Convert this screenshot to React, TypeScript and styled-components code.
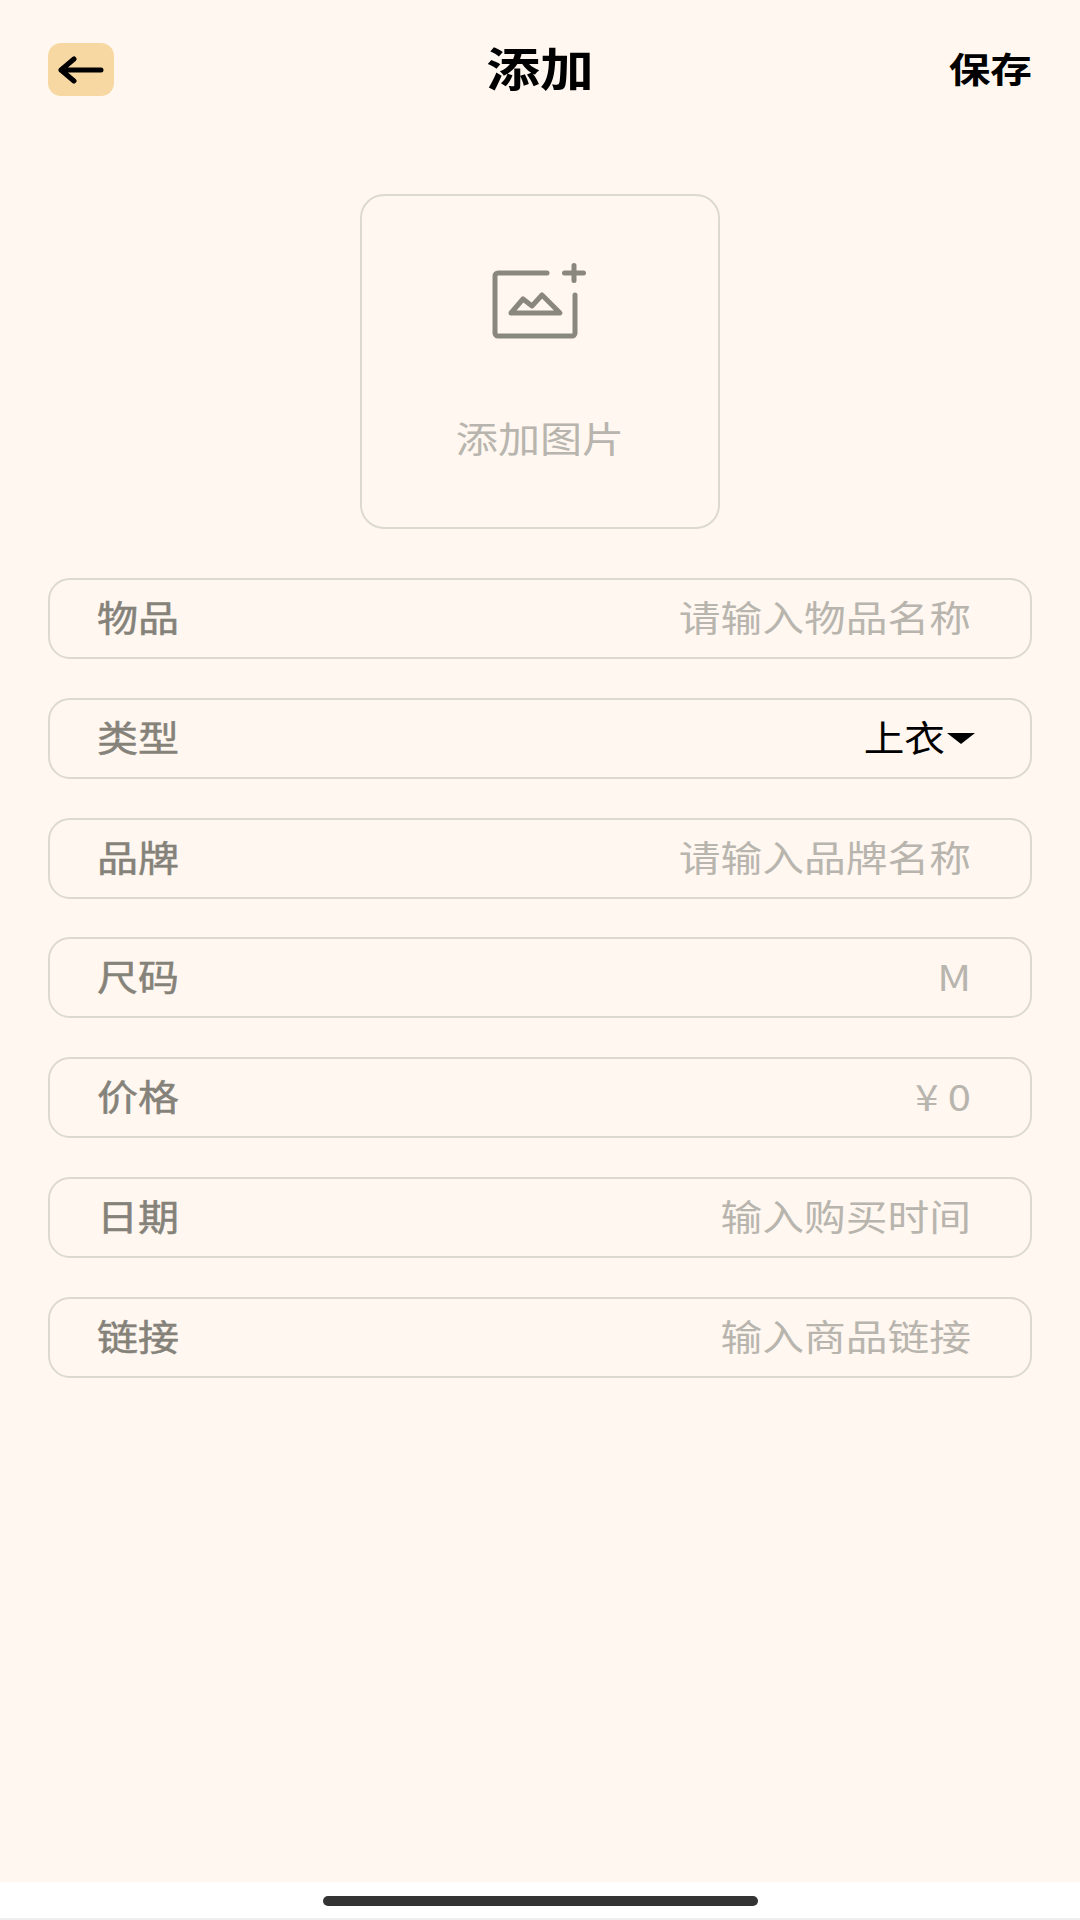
import styled, { createGlobalStyle } from 'styled-components'

const GlobalStyle = createGlobalStyle`
  html, body {
    margin: 0;
    padding: 0;
    background: #fff;
  }
  * {
    box-sizing: border-box;
  }
`

const fields = [
  { label: '物品', placeholder: '请输入物品名称' },
  { label: '类型', value: '上衣' },
  { label: '品牌', placeholder: '请输入品牌名称' },
  { label: '尺码', placeholder: 'M' },
  { label: '价格', placeholder: '¥ 0' },
  { label: '日期', placeholder: '输入购买时间' },
  { label: '链接', placeholder: '输入商品链接' },
]

const App = () => {
  return (
    <Page>
      <GlobalStyle />
      <Main>
        <Header>
          <BackButton aria-label="返回">
            <svg width="46" height="28" viewBox="0 0 46 28" fill="none">
              <path
                d="M43 14H3M16 3 3 14l13 11"
                stroke="#000"
                strokeWidth="5"
                strokeLinecap="round"
                strokeLinejoin="round"
              />
            </svg>
          </BackButton>
          <Title>添加</Title>
          <SaveButton>
            <span>保存</span>
          </SaveButton>
        </Header>

        <ImagePicker>
          <svg width="100" height="80" viewBox="0 0 100 80" fill="none">
            <path
              d="M57 13H8a3 3 0 0 0-3 3v57a3 3 0 0 0 3 3h74a3 3 0 0 0 3-3V35"
              stroke="#8a877f"
              strokeWidth="5"
              strokeLinecap="round"
            />
            <path
              d="M74.5 13h19M84 5.5v15"
              stroke="#8a877f"
              strokeWidth="5"
              strokeLinecap="round"
            />
            <path
              d="M21 53 33 39l9 7 10-11 18 18Z"
              stroke="#8a877f"
              strokeWidth="5"
              strokeLinejoin="round"
            />
          </svg>
          <PickerText>添加图片</PickerText>
        </ImagePicker>

        <Form>
          {fields.map((field) => (
            <Row key={field.label}>
              <Label>{field.label}</Label>
              {field.value ? (
                <Select>
                  <Value>{field.value}</Value>
                  <Caret />
                </Select>
              ) : (
                <Placeholder>{field.placeholder}</Placeholder>
              )}
            </Row>
          ))}
        </Form>
      </Main>
      <HomeArea>
        <HomeBar />
      </HomeArea>
    </Page>
  )
}

const cjk = `'Noto Sans CJK SC', 'Noto Sans', sans-serif`

const Page = styled.div`
  width: 1080px;
  height: 1920px;
  display: flex;
  flex-direction: column;
  font-family: ${cjk};
  overflow: hidden;
`

const Main = styled.main`
  flex: 1;
  background: #fff7f0;
  padding: 43px 48px 0 48px;
`

const Header = styled.header`
  display: grid;
  grid-template-columns: 1fr auto 1fr;
  align-items: center;
  height: 53px;
`

const BackButton = styled.button`
  width: 66px;
  height: 53px;
  padding: 0;
  border: 0;
  border-radius: 13px;
  background: #f7d8a3;
  display: flex;
  align-items: center;
  justify-content: center;
`

const Title = styled.h1`
  margin: 0 0 7px;
  font-size: 46px;
  font-weight: 700;
  line-height: 46px;
  color: #000;
  transform: scaleX(1.17);
`

const SaveButton = styled.div`
  justify-self: end;
  margin-bottom: 3px;
  font-size: 35px;
  font-weight: 700;
  line-height: 50px;
  color: #000;
  span {
    display: inline-block;
    transform: scaleX(1.19);
    transform-origin: right center;
  }
`

const ImagePicker = styled.div`
  width: 360px;
  height: 335px;
  margin: 98px auto 0;
  padding-top: 64px;
  border: 2px solid #dcd9d1;
  border-radius: 24px;
  display: flex;
  flex-direction: column;
  align-items: center;
`

const PickerText = styled.div`
  margin-top: 74px;
  font-size: 36px;
  line-height: 46px;
  color: #b8b5ae;
  transform: scaleX(1.17);
`

const Form = styled.div`
  margin-top: 49px;
  display: flex;
  flex-direction: column;
  gap: 38.8px;
`

const Row = styled.div`
  height: 81px;
  padding: 0 59px 5px 47px;
  border: 2px solid #dcd9d1;
  border-radius: 22px;
  display: flex;
  align-items: center;
  justify-content: space-between;
`

const Label = styled.span`
  display: inline-block;
  font-size: 36px;
  font-weight: 400;
  color: #85827a;
  -webkit-text-stroke: 0.5px #85827a;
  transform: scaleX(1.14);
  transform-origin: left center;
`

const Placeholder = styled.span`
  display: inline-block;
  font-size: 36px;
  color: #b8b5ae;
  transform: scaleX(1.16);
  transform-origin: right center;
`

const Select = styled.div`
  display: flex;
  align-items: center;
  margin-right: -4px;
`

const Value = styled.span`
  display: inline-block;
  margin-right: 2px;
  font-size: 36px;
  color: #000;
  transform: scaleX(1.13);
  transform-origin: right center;
`

const Caret = styled.span`
  width: 0;
  height: 0;
  margin-top: 5px;
  border-left: 14px solid transparent;
  border-right: 14px solid transparent;
  border-top: 11px solid #000;
`

const HomeArea = styled.div`
  height: 38px;
  padding-top: 14px;
  background: #fff;
  border-bottom: 2px solid #eeeeee;
`

const HomeBar = styled.div`
  width: 435px;
  height: 10px;
  margin: 0 auto;
  border-radius: 5px;
  background: #333;
`

export default App
